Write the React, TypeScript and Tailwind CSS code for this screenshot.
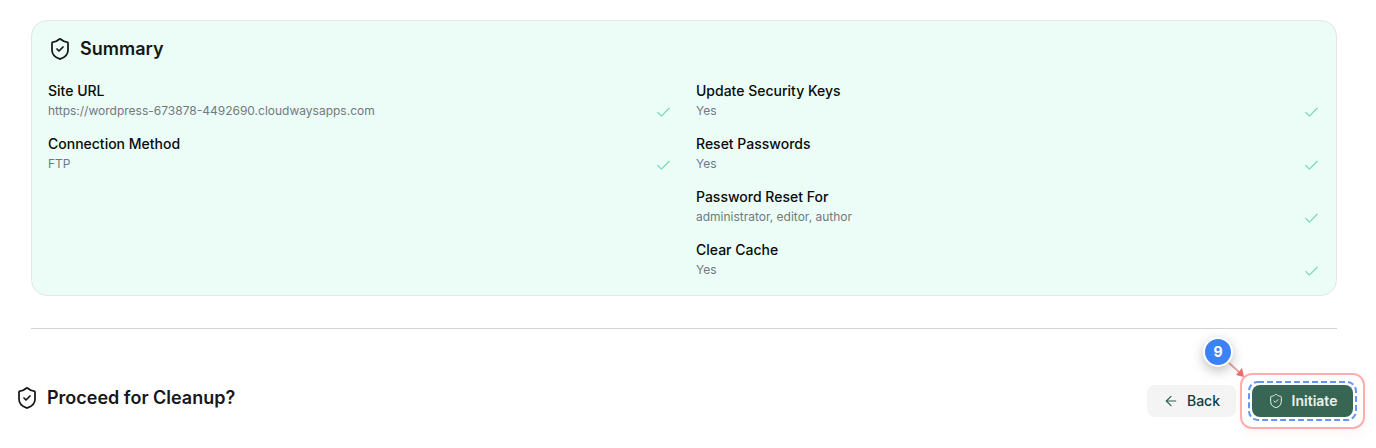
import { ArrowLeft, Check, ShieldCheck } from "lucide-react";

const leftRows = [
  { label: "Site URL", value: "https://wordpress-673878-4492690.cloudwaysapps.com" },
  { label: "Connection Method", value: "FTP" },
];

const rightRows = [
  { label: "Update Security Keys", value: "Yes" },
  { label: "Reset Passwords", value: "Yes" },
  { label: "Password Reset For", value: "administrator, editor, author" },
  { label: "Clear Cache", value: "Yes" },
];

function SummaryRow({ label, value }: { label: string; value: string }) {
  return (
    <div className="flex h-[53px] items-start justify-between">
      <div>
        <div className="text-sm leading-5 font-medium text-[#0a0a0a]">{label}</div>
        <div className="text-xs leading-5 text-[#737880]">{value}</div>
      </div>
      <Check size={17} strokeWidth={1.5} className="mt-[23px] text-[#6fd8ae]" />
    </div>
  );
}

export default function App() {
  return (
    <div className="h-[448px] w-[1376px] overflow-hidden bg-white font-['Inter',sans-serif]">
      <div className="pt-5 pr-[39px] pl-[31px]">
        <div className="h-[276px] rounded-2xl border border-[#e2e8e5] bg-[#ebfdf6] px-4 pt-4">
          <div className="flex h-6 items-center gap-2">
            <ShieldCheck size={24} strokeWidth={1.75} className="text-[#171717]" />
            <h2 className="text-lg font-semibold text-[#171717]">Summary</h2>
          </div>
          <div className="mt-5 grid grid-cols-2 gap-x-6">
            <div>
              {leftRows.map((row) => (
                <SummaryRow key={row.label} {...row} />
              ))}
            </div>
            <div>
              {rightRows.map((row) => (
                <SummaryRow key={row.label} {...row} />
              ))}
            </div>
          </div>
        </div>
        <div className="mt-8 h-px bg-[#d4d4d4]" />
      </div>

      <div className="mt-14 flex h-8 items-center justify-between pr-[23px] pl-[15px]">
        <div className="mb-[6px] flex items-center gap-2">
          <ShieldCheck size={24} strokeWidth={1.75} className="text-[#171717]" />
          <h2 className="text-lg font-semibold text-[#171717]">Proceed for Cleanup?</h2>
        </div>
        <div className="flex items-center gap-4">
          <button
            type="button"
            className="flex h-8 w-[89px] items-center justify-center gap-2 rounded-lg bg-[#f4f4f5] text-sm font-medium text-[#0f3d3a]"
          >
            <ArrowLeft size={16} strokeWidth={1.75} className="text-[#2f5f50]" />
            Back
          </button>
          <div className="relative">
            <button
              type="button"
              className="flex h-8 w-[101px] items-center justify-center gap-2 rounded-lg bg-[#386655] text-sm font-semibold text-[#e9f2ee]"
            >
              <ShieldCheck size={16} strokeWidth={1.5} />
              Initiate
            </button>
            {/* dashed focus ring, svg so the dash length can be set */}
            <svg className="absolute -top-1 -left-1" width="109" height="40" fill="none">
              <rect
                x="1"
                y="1"
                width="107"
                height="38"
                rx="9"
                stroke="#6395f2"
                strokeWidth="2"
                strokeDasharray="6 3"
              />
            </svg>
            <div className="absolute -inset-3 rounded-xl border-2 border-[#fcaeae] shadow-[0_4px_12px_rgba(248,113,113,0.08)]" />
            <svg
              className="absolute -top-[24px] -left-[24px]"
              width="24"
              height="24"
              viewBox="0 0 24 24"
              fill="none"
            >
              <path d="M1 2 L11 11" stroke="#e8a5a5" strokeWidth="2" />
              <path d="M16 16 L8 14 L14 7 Z" fill="#ef6a6a" />
            </svg>
            <div className="absolute -top-[49px] -left-[49px] flex h-[30px] w-[30px] translate-y-px items-center justify-center rounded-full border-2 border-white bg-[#3b82f6] text-sm font-bold text-white shadow-[0_4px_12px_rgba(0,0,0,0.25)]">
              9
            </div>
          </div>
        </div>
      </div>
    </div>
  );
}
